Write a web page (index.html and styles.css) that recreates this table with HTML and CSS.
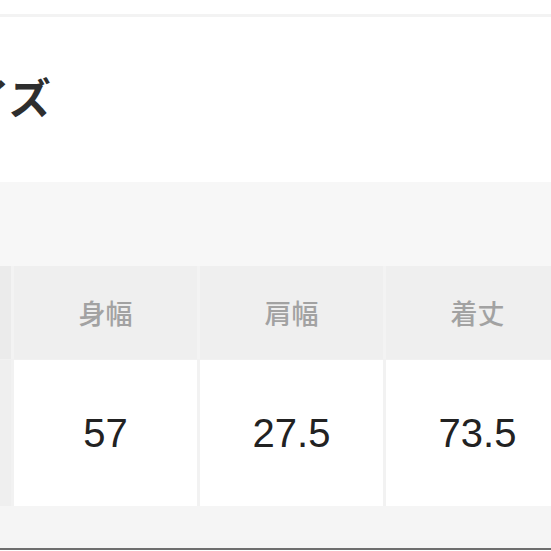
FILE: index.html
```html
<!DOCTYPE html>
<html lang="ja">
<head>
<meta charset="utf-8">
<link rel="stylesheet" href="styles.css">
</head>
<body>
<div class="page">
  <div class="topbar"></div>
  <div class="title-area">
    <h2 class="title">サイズ</h2>
  </div>
  <div class="band"></div>
  <div class="size-table">
    <div class="row head">
      <div class="cell lead"></div>
      <div class="cell">身幅</div>
      <div class="cell">肩幅</div>
      <div class="cell">着丈</div>
    </div>
    <div class="row data">
      <div class="cell lead"></div>
      <div class="cell">57</div>
      <div class="cell">27.5</div>
      <div class="cell">73.5</div>
    </div>
  </div>
  <div class="bottom"></div>
</div>
</body>
</html>
```

FILE: styles.css
```css
html, body {
  margin: 0;
  padding: 0;
  background: #ffffff;
  overflow: hidden;
}
.page {
  width: 551px;
  height: 551px;
  overflow: hidden;
  font-family: "Noto Sans CJK JP", "Liberation Sans", sans-serif;
}
.topbar {
  height: 14px;
  border-bottom: 3px solid #f3f3f3;
  background: #ffffff;
}
.title-area {
  height: 165px;
  display: flex;
  align-items: flex-start;
}
.title {
  margin: 58px 0 0 -74px;
  font-size: 42px;
  line-height: 42px;
  font-weight: 700;
  color: #2e2e2e;
  letter-spacing: 0;
  white-space: nowrap;
}
.band {
  height: 84px;
  background: #f7f7f7;
}
.size-table {
  display: flex;
  flex-direction: column;
  gap: 1px;
  background: #f1f1f1;
}
.row {
  display: grid;
  grid-template-columns: 100px 183px 183px 183px;
  column-gap: 3px;
  margin-left: -89px;
  width: 661px;
}
.head {
  height: 93px;
  background: #f3f3f3;
}
.head .cell {
  background: #efefef;
  color: #a2a2a2;
  font-size: 27px;
  font-weight: 500;
  display: flex;
  align-items: center;
  justify-content: center;
}
.head .lead {
  background: #ebebeb;
}
.data {
  height: 146px;
  background: #f2f2f2;
}
.data .cell {
  background: #ffffff;
  color: #222222;
  font-family: "Liberation Sans", Arial, sans-serif;
  font-size: 40px;
  display: flex;
  align-items: center;
  justify-content: center;
}
.data .lead {
  background: #efefef;
}
.bottom {
  height: 42px;
  background: #f5f5f5;
  border-bottom: 2px solid #6e6e6e;
}
```
